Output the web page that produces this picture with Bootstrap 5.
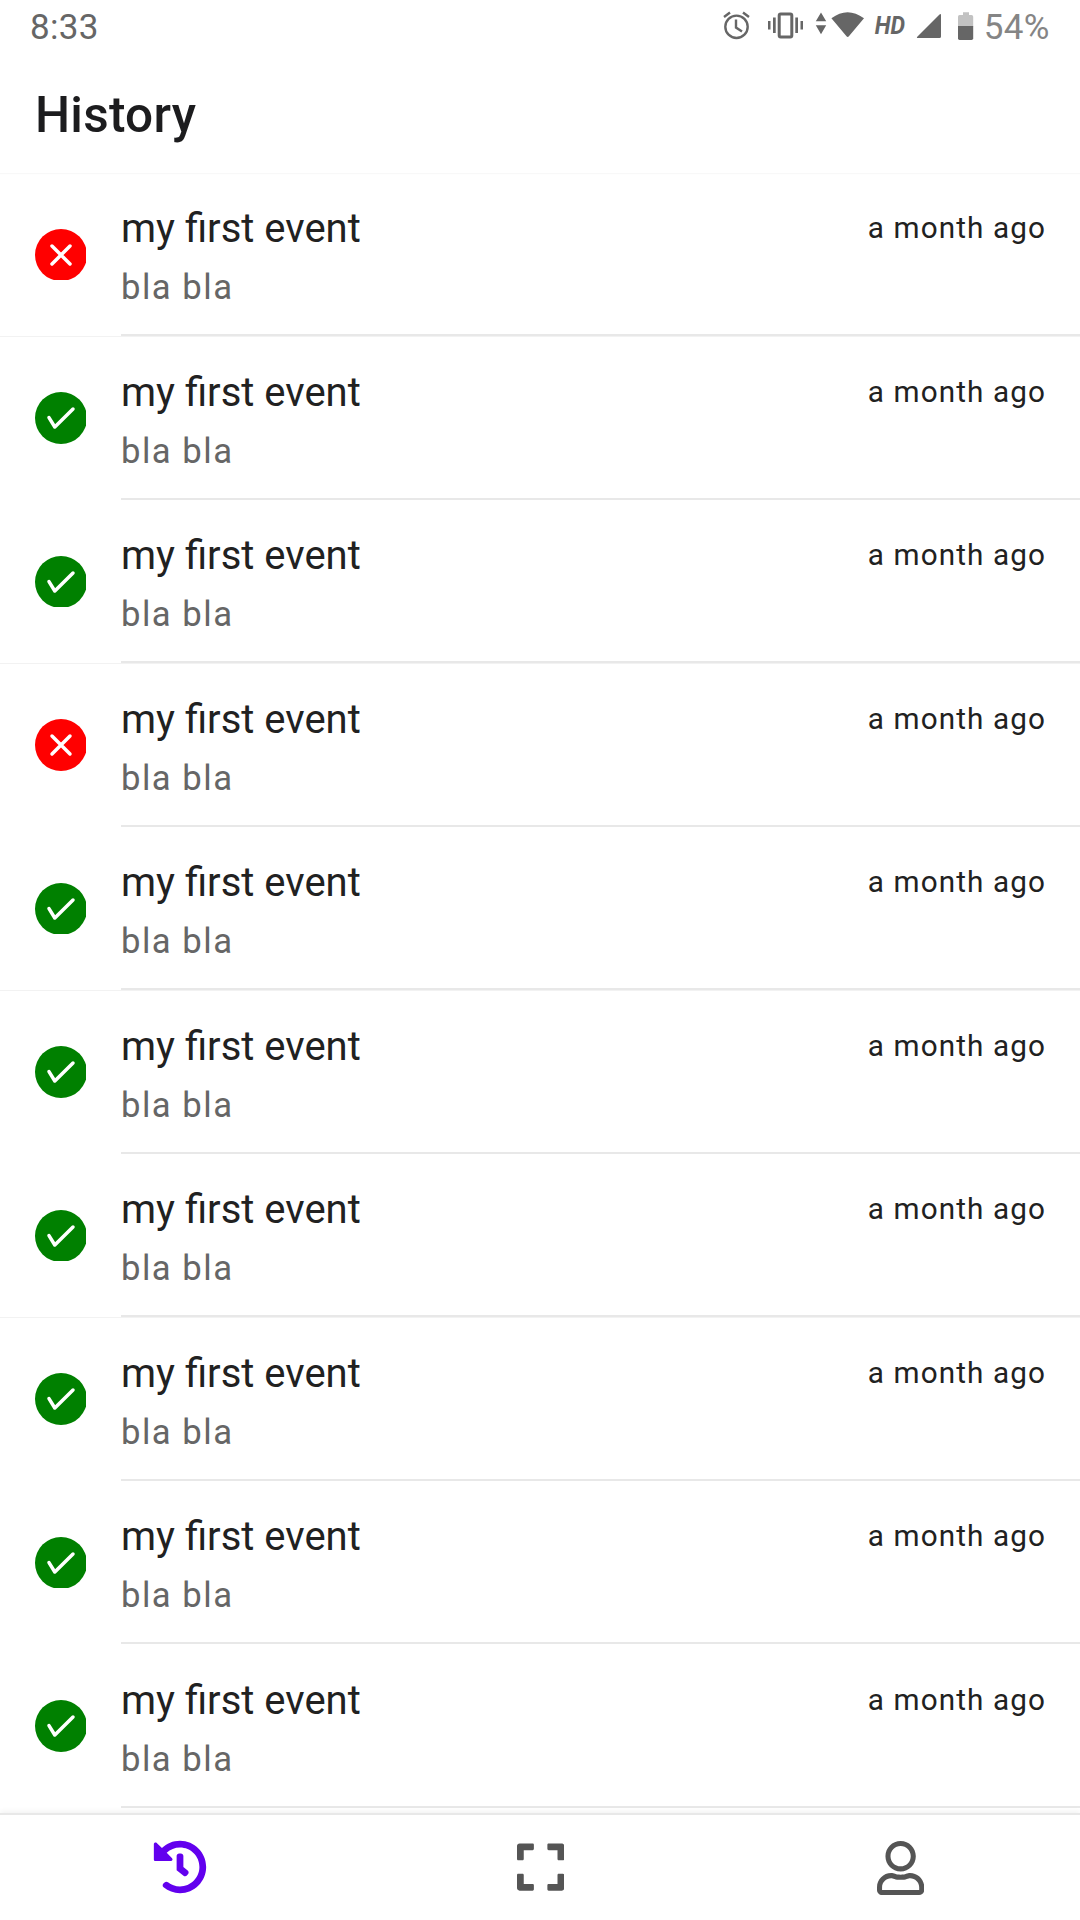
<!DOCTYPE html>
<html lang="en">
<head>
<meta charset="utf-8">
<meta name="viewport" content="width=device-width, initial-scale=1">
<title>History</title>
<link href="https://cdn.jsdelivr.net/npm/bootstrap@5.3.0/dist/css/bootstrap.min.css" rel="stylesheet">
<style>
  body { font-family: Roboto, sans-serif; background: #fff; color: #212121; }
  .screen { height: 1920px; }
  svg { display: block; flex: none; }
  .status { height: 50px; padding: 0 30.2px 0 30px; font-size: 35px; line-height: 56px; color: #666; }
  .status svg { fill: #666; }
  .clock { letter-spacing: .35px; }
  .level { color: #858585; margin-left: 9.8px; letter-spacing: .35px; }
  .hd { font-size: 26.5px; font-weight: 700; font-style: italic; line-height: 50px; width: 34px; margin-left: 8px; transform: scaleX(.87); transform-origin: 40% 50%; }
  .topbar { height: 122.6px; padding: 7px 35px 0; box-shadow: 0 1px 1px #f8f8f8; }
  .topbar h1 { font-size: 49.5px; font-weight: 500; line-height: 60px; color: #1c1c1e; letter-spacing: .25px; }
  .event { height: 163.53px; padding-left: 35px; }
  .event.edge { box-shadow: 0 1px 0 #f2f2f2; }
  .event.edge svg { margin-bottom: .5px; }
  .event-body { margin-left: 35px; padding: 30.6px 34px 0 0; border-bottom: 2px solid #e8e8e8; }
  .event-title { font-size: 40px; line-height: 52px; }
  .event-note { font-size: 34.65px; line-height: 48px; margin-top: 8px; color: #666; letter-spacing: 1.5px; }
  .event-time { font-size: 29.7px; line-height: 40px; margin-top: 5px; letter-spacing: 1.1px; }
  .state-mark { fill: none; stroke: #fff; stroke-width: 3.5; stroke-linecap: round; stroke-linejoin: round; }
  .tabs { height: 107px; padding-bottom: 2px; border-top: 2px solid #e8e8e8; box-shadow: 0 -2px 5px rgba(0,0,0,.05); z-index: 1; }
  .tabs a { color: #555; }
  .tabs a + a { padding-left: 1.5px; }
  .tabs a:last-child { padding-top: 2px; }
  .tabs a.active { color: #6200ee; }
  .tabs svg { fill: currentColor; }
</style>
<script src="https://cdn.jsdelivr.net/npm/bootstrap@5.3.0/dist/js/bootstrap.bundle.min.js"></script>
</head>
<body>
<div class="screen d-flex flex-column overflow-hidden">
  <div class="status d-flex justify-content-between">
    <span class="clock">8:33</span>
    <div class="d-flex">
      <svg width="28" height="50" viewBox="722 0 28 50"><g style="fill:none;stroke:#666;stroke-width:2.4"><circle cx="736.5" cy="26.8" r="11.2"/><path d="M736 19.5v8l6 4M724 17l6-4.5M749 17l-6-4.5"/></g></svg>
      <svg width="38" height="50" viewBox="766 0 38 50" style="margin-left:16px"><rect x="779.2" y="14" width="12.6" height="23" rx="1.5" style="fill:none;stroke:#666;stroke-width:3"/><path d="M773 17.5h2.700v15.500H773zM768 21h2.500v8.500H768zM795.300 17.500h2.700v15.500h-2.700zM800.500 21h2.500v8.500h-2.500z"/></svg>
      <svg width="12" height="50" viewBox="815 0 12 50" style="margin-left:11px"><path d="M821 12.500l5.200 8.700h-10.400zM821 34.200l5.200-8.900h-10.400z"/></svg>
      <svg width="34" height="50" viewBox="831 0 34 50" style="margin-left:4px"><path d="M831.400 18.300Q847.500 6 864 18.300L848.900 36.300q-1.200 1.500-2.400 0z"/></svg>
      <span class="hd">HD</span>
      <svg width="25" height="50" viewBox="916 0 25 50" style="margin-left:9px"><path d="M941 15v21.500q0 1.500-1.500 1.500H918q-2 0-.5-1.500l22-22q1.500-1.300 1.500.5z"/></svg>
      <svg width="16" height="50" viewBox="958 0 16 50" style="margin-left:17px"><path d="M959.500 15H963v-2.800h6V15h2.500q1.700 0 1.700 1.700V26.500H958V16.700q0-1.700 1.500-1.700z" style="fill:#c2c2c2"/><path d="M958 26h15.200v12.300q0 1.700-1.700 1.700h-12q-1.500 0-1.500-1.700z"/></svg>
      <span class="level">54%</span>
    </div>
  </div>
  <header class="topbar d-flex align-items-center flex-shrink-0"><h1 class="m-0">History</h1></header>

  <main id="events" class="flex-grow-1 overflow-hidden"></main>

  <nav class="tabs d-flex flex-shrink-0 bg-white position-relative">
    <a href="#" class="active col-4 d-flex justify-content-center align-items-center" aria-label="History"><svg width="54" height="54" viewBox="0 0 512 512"><path d="M504 255.531c.253 136.64-111.18 248.372-247.82 248.468-59.015.042-113.223-20.53-155.822-54.911-11.077-8.94-11.905-25.541-1.839-35.607l11.267-11.267c8.609-8.609 22.353-9.551 31.891-1.984C173.062 425.135 212.781 440 256 440c101.705 0 184-82.311 184-184 0-101.705-82.311-184-184-184-48.814 0-93.149 18.969-126.068 49.932l50.754 50.754c10.08 10.08 2.941 27.314-11.313 27.314H24c-8.837 0-16-7.163-16-16V38.627c0-14.254 17.234-21.393 27.314-11.314l49.372 49.372C129.209 34.136 189.552 8 256 8c136.81 0 247.747 110.78 248 247.531zm-180.912 78.784l9.823-12.63c8.138-10.463 6.253-25.542-4.21-33.679L288 256.349V152c0-13.255-10.745-24-24-24h-16c-13.255 0-24 10.745-24 24v135.651l65.409 50.874c10.463 8.137 25.541 6.253 33.679-4.21z"/></svg></a>
    <a href="#" class="col-4 d-flex justify-content-center align-items-center" aria-label="Scan"><svg width="47.25" height="54" viewBox="0 0 448 512"><path d="M0 180V56c0-13.300 10.700-24 24-24h124c6.600 0 12 5.400 12 12v40c0 6.600-5.400 12-12 12H64v84c0 6.600-5.400 12-12 12H12c-6.600 0-12-5.400-12-12zM288 44v40c0 6.600 5.400 12 12 12h84v84c0 6.600 5.400 12 12 12h40c6.600 0 12-5.400 12-12V56c0-13.300-10.700-24-24-24H300c-6.600 0-12 5.400-12 12zm148 276h-40c-6.600 0-12 5.400-12 12v84h-84c-6.600 0-12 5.400-12 12v40c0 6.600 5.400 12 12 12h124c13.300 0 24-10.700 24-24V332c0-6.600-5.400-12-12-12zM160 468v-40c0-6.600-5.400-12-12-12H64v-84c0-6.600-5.400-12-12-12H12c-6.600 0-12 5.400-12 12v124c0 13.300 10.700 24 24 24h124c6.600 0 12-5.400 12-12z"/></svg></a>
    <a href="#" class="col-4 d-flex justify-content-center align-items-center" aria-label="Profile"><svg width="47.25" height="54" viewBox="0 0 448 512"><path d="M313.600 304c-28.700 0-42.500 16-89.600 16-47.100 0-60.800-16-89.600-16C60.200 304 0 364.200 0 438.400V464c0 26.500 21.500 48 48 48h352c26.500 0 48-21.500 48-48v-25.600c0-74.200-60.200-134.400-134.400-134.400zM400 464H48v-25.600c0-47.600 38.800-86.400 86.400-86.400 14.600 0 38.300 16 89.600 16 51.700 0 74.900-16 89.600-16 47.600 0 86.400 38.800 86.400 86.400V464zM224 288c79.500 0 144-64.500 144-144S303.500 0 224 0 80 64.500 80 144s64.500 144 144 144zm0-240c52.900 0 96 43.100 96 96s-43.100 96-96 96-96-43.100-96-96 43.100-96 96-96z"/></svg></a>
  </nav>
</div>
<script>
  // One entry per event: true = accepted, false = rejected
  const events = [false, true, true, false, true, true, true, true, true, true];
  document.getElementById('events').innerHTML = events.map((ok, i) => `
    <div class="event d-flex ${i % 2 === 0 && i < 8 ? 'edge' : ''}">
      <svg class="align-self-center" width="51" height="${i % 2 ? 52 : 51}" viewBox="0 0 51 ${i % 2 ? 52 : 51}">
        <circle cx="26" cy="26" r="26" fill="${ok ? 'green' : 'red'}"/>
        <path class="state-mark" d="${ok ? 'M14 25.600L19.800 35 38 17' : 'M17 17L35 35M35 17L17 35'}"/>
      </svg>
      <div class="event-body flex-grow-1 d-flex justify-content-between">
        <div>
          <div class="event-title">my first event</div>
          <div class="event-note">bla bla</div>
        </div>
        <div class="event-time">a month ago</div>
      </div>
    </div>`).join('');
</script>
</body>
</html>
